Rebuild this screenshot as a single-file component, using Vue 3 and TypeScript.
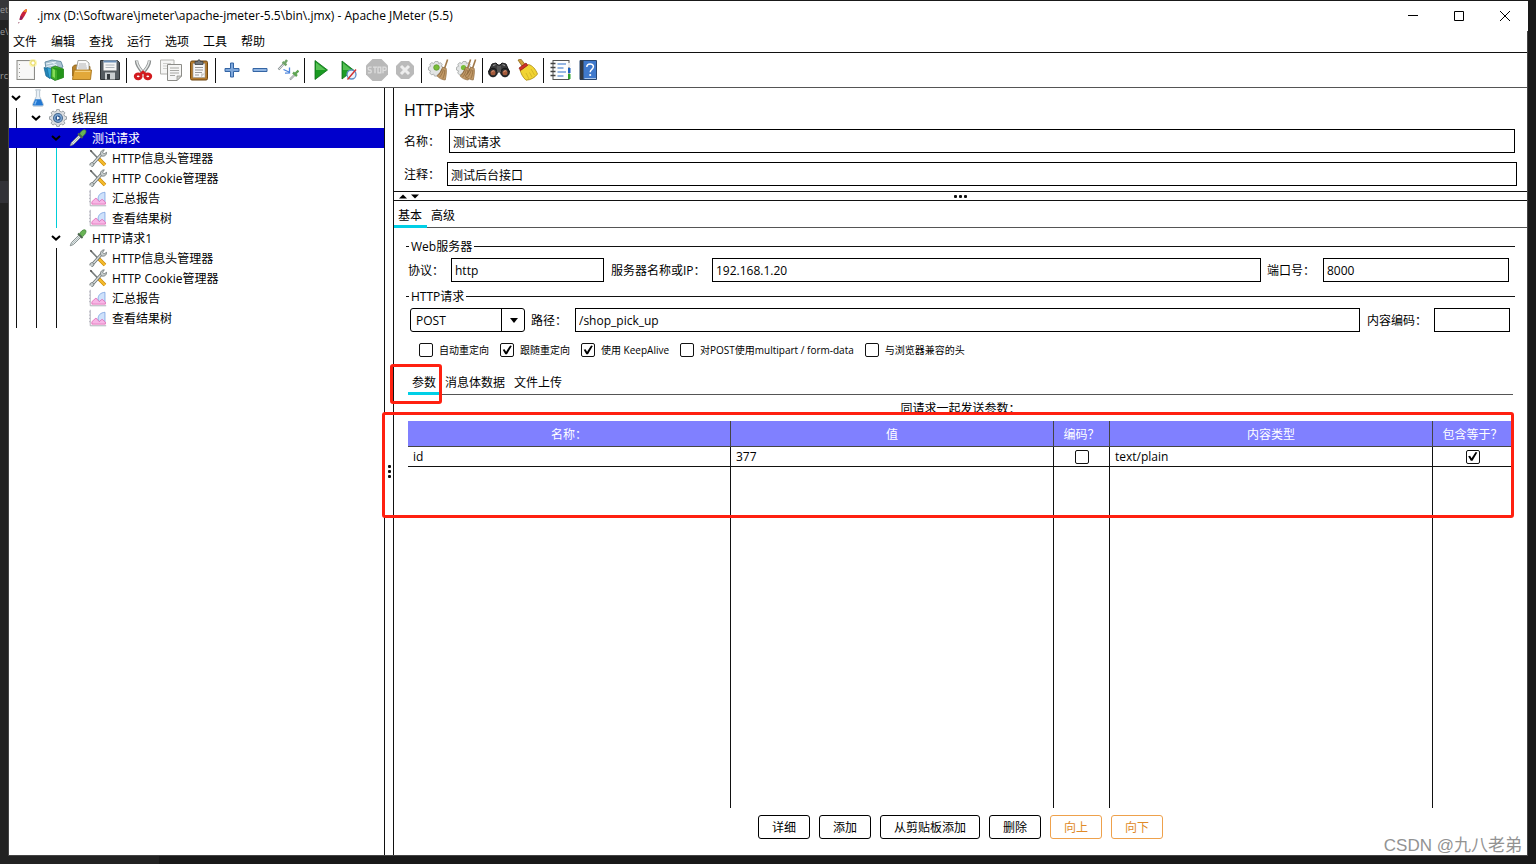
<script setup lang="ts">
import { reactive, ref } from 'vue'

interface TreeNode {
  label: string
  icon: string
  level: number
  open?: boolean
  selected?: boolean
  accent?: boolean
}

interface Param {
  name: string
  value: string
  encode: boolean
  type: string
  include: boolean
}

const broom =
  '<path d="M20.600 .6l-3 8.600" stroke="#a07848" stroke-width="1.600"/><path d="M15.600 8.200l3.600 1.200c.6 3-.2 8.600-1 11.600-3.200-.2-6.600-2-8.200-4.200 2.400-2 4.400-5 5.600-8.600z" fill="#c29a68" stroke="#8f6a3e" stroke-width=".7"/><path d="M16.400 10.500c-.8 3-2 5.500-3.800 7.700M17.800 11c0 3-.8 6-2 8.600M15 9.800c-.8 2.600-2 4.600-3.600 6.600" stroke="#7d5a33" stroke-width=".6" fill="none"/>'

const gear =
  '<path d="M8 2.500h3l.6 2 2-.8 1.600 1.800-1 1.800 2 1v3l-2 .8.8 2-2 1.800-2-.8-.8 2H7.500l-.8-2-2.200.8-1.800-2 .9-2L1.500 11V8.300l2.100-1-.8-2 2-1.700 2 .9z" fill="#e2e4e4" stroke="#a9adad" stroke-width=".9"/>'

const icons: Record<string, string> = {
  feather:
    '<path d="M15.800 1.500c1 1.200.6 2.600-.1 4.200l-2.400 5-3.600 5.300-3.300.6c-.2-2.600.7-5.400 2-8 1.700-3.300 4.600-6.300 7.400-7.100z" fill="#c8203c"/><path d="M15.800 1.500c1 1.200.6 2.600-.1 4.200l-4.200-.6c1-1.700 2.800-3 4.300-3.600z" fill="#f08a24"/><path d="M8 10.500l2.800 2.200-2.100 3.300-2.300.6c-.1-2 .5-4 1.600-6.100z" fill="#8b2060"/><path d="M5.500 19.500l-.6 1.500" stroke="#7a1a3c" stroke-width="1.200" fill="none"/>',
  file: '<rect x="2" y="1.500" width="17.500" height="19" fill="#efefed" stroke="#8c8c88"/><rect x="3.500" y="3" width="14.500" height="16" fill="#f8f8f7"/><path d="M4.500 5v1M4.500 9v1M4.500 13v1M4.500 17v1" stroke="#9a9a96"/><circle cx="18" cy="4" r="4" fill="#fbf3a0" opacity=".75"/><circle cx="18" cy="4" r="2.200" fill="#fff" stroke="#ead94e"/>',
  templates:
    '<path d="M2 3l7-2 9 1.500L20 8 9 14 3 10z" fill="#aac3d2" stroke="#527d98" stroke-width=".8"/><path d="M3 5l10-2M3.500 7.500l10-2M9 3l5 4" stroke="#e9f4fa"/><path d="M1 8.500l6 2v9L3 17z" fill="#2384b8" stroke="#11618c" stroke-width=".7"/><path d="M4 8.500l8 2.500v10l-6-2.500z" fill="#38a7d8" stroke="#1574a0" stroke-width=".7"/><path d="M8.500 8.500l4-1.500 8 3v8.500L12 21.500l-4-2.500z" fill="#3fae2a" stroke="#22751a" stroke-width=".7"/><path d="M8.500 8.500L14 11.500v9.500l6.500-2.500V10" fill="#23941a"/><path d="M9.500 9.500l2.500 1.500v8l-2.500-1.500z" fill="#85dd58"/>',
  open: '<path d="M1.500 8l2-2H8l1 1.500h10V17H1.500z" fill="#b8822a" stroke="#8c5f16" stroke-width=".8"/><path d="M7 1.500h8l3 2.500v8H5z" fill="#fafafa" stroke="#90908c" stroke-width=".8"/><path d="M8 5h7M7.500 7h8M7 9h9" stroke="#aaa" stroke-width=".9"/><path d="M1.500 20.500L3 11H20.500l-1 9.500z" fill="#e2a83a" stroke="#a8741a" stroke-width=".9"/><path d="M4 12.300H19.300" stroke="#fbe09a" stroke-width=".9"/>',
  save: '<path d="M1.500 1.500h17l2 2v17h-19z" fill="#555b61" stroke="#2e3236"/><rect x="4.500" y="1.500" width="13" height="10" fill="#f5f5f5"/><rect x="4.500" y="1.500" width="13" height="2" fill="#6b8fb8"/><path d="M6.500 6h9M6.500 8.500h9" stroke="#aeb4ba"/><rect x="6" y="13.500" width="10" height="7" fill="#c9cdd0"/><rect x="8" y="15" width="3" height="5.500" fill="#34393e"/>',
  cut: '<path d="M4.500 1.500c0 4 3 8.500 7.200 13" fill="none" stroke="#888c8c" stroke-width="3.400"/><path d="M17.500 1.500c0 4-3 8.500-7.200 13" fill="none" stroke="#888c8c" stroke-width="3.400"/><path d="M4.800 2c.4 4 3.200 8 6.500 11.500M17.200 2c-.4 4-3.200 8-6.500 11.500" fill="none" stroke="#e4e7e7" stroke-width="1.500"/><ellipse cx="6.200" cy="17.300" rx="2.900" ry="2.400" fill="#fff" stroke="#d21a1e" stroke-width="3"/><ellipse cx="15.800" cy="17.300" rx="2.900" ry="2.400" fill="#fff" stroke="#d21a1e" stroke-width="3"/><path d="M8 15.500l3-2.500 3 2.500" stroke="#d21a1e" stroke-width="2.600" fill="none"/>',
  copy: '<path d="M.5 1h13.500v14H.5z" fill="#f6f6f5" stroke="#b2b2ae"/><path d="M3 4.500h8M3 7h8M3 9.500h6" stroke="#cfcfcc"/><path d="M7.500 5.500H21.500V17L17 21.500H7.500z" fill="#f6f6f5" stroke="#8c8c88"/><path d="M10 9h9M10 11.500h9M10 14h9M10 16.500h5" stroke="#a8a8a4"/><path d="M17 21.500V17h4.500z" fill="#d0d0cc" stroke="#8c8c88" stroke-width=".7"/>',
  paste:
    '<rect x="2.500" y="2" width="17" height="19" rx="1.500" fill="#b37a2c" stroke="#6f4710"/><path d="M5 4.500h12v14H5z" fill="#f8f8f7" stroke="#999" stroke-width=".6"/><path d="M7 8.500h8M7 11h8M7 13.500h7M7 16h4" stroke="#999"/><path d="M13 18.500v-4h4z" fill="#cbcbc8"/><path d="M7 2.500h2.500L10.500.8h1L12.500 2.500H15v3H7z" fill="#73787c" stroke="#3b3f42" stroke-width=".8"/>',
  plus: '<path d="M9.500 4h3v5.500H18v3h-5.500V18h-3v-5.500H4v-3h5.500z" fill="#7fa8dc" stroke="#3465a4"/>',
  minus: '<path d="M4 9.500h14v3H4z" fill="#8fb4e2" stroke="#3465a4"/>',
  toggle:
    '<path d="M1.500 10.500L7 4.500" stroke="#8f9898" stroke-width="2.200"/><path d="M2 10l5-5" stroke="#f3f5f5" stroke-width=".8"/><path d="M5.500 3l4 3.200M7.500 4.500L10 1" stroke="#70a468" stroke-width="2.400"/><path d="M13 20.500l5-5" stroke="#8f9898" stroke-width="2.200"/><path d="M13.500 20l4.500-4.500" stroke="#f3f5f5" stroke-width=".8"/><path d="M16 13.500l4 3.500M18 15l3.500-3.500" stroke="#5fa453" stroke-width="2.400"/><path d="M6.500 10.500l5.500 2.500M12.500 8.500v5.500l-4.500.2" fill="none" stroke="#4b84dc" stroke-width="1.300"/>',
  play: '<path d="M5 1.500v19L17.500 11z" fill="#1a9a22" stroke="#0b6d16" stroke-width=".8"/><path d="M6 3.500V11h9.500z" fill="#58c255"/>',
  playFast:
    '<path d="M4 2v18L15.500 11z" fill="#1f9c27" stroke="#0b6d16" stroke-width=".8"/><path d="M5 4v7h8.500z" fill="#55bf53"/><circle cx="13.500" cy="15.500" r="4.500" fill="#eef4fb" stroke="#5f8fc6" stroke-width="1.300"/><path d="M9.500 20.500l8.500-10" stroke="#d23030" stroke-width="1.400"/>',
  stop: '<path d="M6.500 0h9L22 6.500v9L15.500 22h-9L0 15.500v-9z" fill="#b9b9b9"/><path d="M5.600 8.200H3.200c-1.400 0-1.400 2.800 0 2.800h1c1.400 0 1.400 2.900 0 2.900H1.900M7 8.200h4M9 8.200v6M12 8.200h2.800v5.700H12zM17 14.200v-6h2c1.600 0 1.600 3.100 0 3.100h-2" fill="none" stroke="#dedede" stroke-width="1.300"/>',
  shutdown:
    '<path d="M7 2h8l5 5v8l-5 5H7l-5-5V7z" fill="#bababa"/><path d="M7 7l8 8M15 7l-8 8" stroke="#ededed" stroke-width="3"/>',
  clear: gear + '<circle cx="9.500" cy="8.500" r="2.800" fill="#78bd38" stroke="#579127" stroke-width=".7"/>' + broom,
  clearAll:
    gear + '<circle cx="8.500" cy="8.500" r="2.600" fill="#78bd38"/><g transform="translate(-5 0)">' + broom + '</g>' + broom,
  search:
    '<path d="M4 5l4-1 2 2h2l2-2 4 1 3.500 8H.5z" fill="#3d3d3e" stroke="#1d1d1e"/><path d="M5 6.500l2.500-.8M14.500 5.700l2.500.8" stroke="#9c9c9c"/><circle cx="5" cy="13.500" r="4.300" fill="#2c2c2d" stroke="#121212"/><circle cx="17" cy="13.500" r="4.300" fill="#2c2c2d" stroke="#121212"/><circle cx="5" cy="13.700" r="2.500" fill="#a55a3a"/><circle cx="17" cy="13.700" r="2.500" fill="#a55a3a"/><path d="M3.500 13.300c.6-1.500 2-1.800 3-1.300M15.500 13.300c.6-1.500 2-1.800 3-1.300" stroke="#e0a284" fill="none"/><path d="M9 7h4v6H9z" fill="#555"/>',
  broomYellow:
    '<path d="M2 1l3-.8L9.500 6 7 8.500z" fill="#d3a13c" stroke="#8d6a1c" stroke-width=".8"/><path d="M6 10l6.500-4.500c4 1 7 4.500 9 9.500-2.500 3.500-6.500 6-11.500 6.200C6.500 18 5 14.500 4 11z" fill="#f1d433" stroke="#aa8a12" stroke-width=".8"/><path d="M3 9L10 4l1.800 2.200-7.300 5.300z" fill="#d03028" stroke="#8e1712" stroke-width=".7"/><path d="M10 14l3 6M13.500 13.500L16 18M15 10l3.500 6" stroke="#c8aa24" stroke-width=".7"/>',
  list: '<rect x="4" y="1.500" width="16" height="19" fill="#fdfdfd" stroke="#555"/><path d="M8.500 5h8.500M8.500 9h6M8.500 13h8.500M8.500 17h6" stroke="#2c6fc9" stroke-width="1.200"/><path d="M1.500 4.500h5M1.500 8.500h5M1.500 12.500h5M1.500 16.500h5" stroke="#444" stroke-width="1.300"/><path d="M19 4h2.500v4H19z" fill="#eee"/><path d="M19 9h2.500v5H19z" fill="#1d60c0"/><path d="M19 15h2.500v5H19z" fill="#2ea22e"/>',
  help: '<path d="M3 1.500h16.500v19H3z" fill="#3f79cc" stroke="#28466f"/><path d="M3 1.500h3.500v19H3z" fill="#33383f"/><path d="M7.500 19.500H19" stroke="#a7c4ea"/><path d="M9.800 8c0-4.200 6.800-4 6.600-.2-.1 2.700-3.200 2.500-3.200 5.400" fill="none" stroke="#fff" stroke-width="1.500"/><circle cx="13.200" cy="16" r="1.100" fill="#fff"/>',
  flask:
    '<path d="M8 1h6l-1 1.500v6.500l4.500 9.500c.5 1.300-.2 2.500-1.700 2.500H6.200c-1.500 0-2.200-1.200-1.700-2.500L9 9V2.500z" fill="#e9f0f6" stroke="#a4b4c0" stroke-width=".9"/><path d="M7.500 12.500h7l2.500 6c.3 1-.2 1.800-1.300 1.800H6.300c-1.100 0-1.600-.8-1.300-1.800z" fill="#2378d2"/><path d="M9 14l-2 5" stroke="#83bdf3" stroke-width="1.500"/>',
  gear: '<path d="M9.500 .5h3l.6 2.300 2 .8 2.100-1.200 2.300 2.300-1.200 2.100.8 2 2.300.6v3.200l-2.300.6-.8 2 1.200 2.100-2.300 2.300-2.100-1.200-2 .8-.6 2.300h-3l-.6-2.300-2-.8-2.100 1.200-2.300-2.300 1.200-2.100-.8-2-2.300-.6V9.400l2.300-.6.8-2-1.200-2.100 2.300-2.300 2.100 1.200 2-.8z" fill="#dcdfe2" stroke="#8b9298" stroke-width="1"/><circle cx="11" cy="11" r="5.500" fill="#7ea9d6" stroke="#4c6c90" stroke-width="1.300"/><circle cx="11" cy="11" r="3.200" fill="#2e568c"/><path d="M9.800 8.800l3.700 2.200-3.700 2.200z" fill="#fff"/>',
  dropper:
    '<path d="M1.500 20.500l1.500-4 9-9 2.500 2.500-9 9z" fill="#dfe6e6" stroke="#7a8585" stroke-width="1.100"/><path d="M3.500 18.500l9-9" stroke="#a9b6b6"/><path d="M11 5.500l5.500 5.500" stroke="#4f6650" stroke-width="2.200"/><path d="M13 6c1-2.800 4-5.500 6.500-5 2.200.8 1.800 4.500-3 8.500z" fill="#69b455" stroke="#3f7d36" stroke-width=".9"/>',
  tools:
    '<path d="M12 12l7.500 7.500" stroke="#c98a0c" stroke-width="4.400"/><path d="M12 12l7.500 7.500" stroke="#f6bd2e" stroke-width="2.600"/><path d="M2 2l10 10.500" stroke="#777d7d" stroke-width="1.900"/><path d="M1 .8l2.500 1 .3 2-2-.4z" fill="#555"/><path d="M4 19L16 5.500" stroke="#6d7474" stroke-width="3.600"/><path d="M4 19L16 5.500" stroke="#d7dcdc" stroke-width="1.700"/><path d="M14.500 7.500c-1.500-3 .6-6.500 4.200-6.500l-2 3 1.800 2L21.500 4c.3 3.600-3 5.500-6 4.500zM1 20c-.3-2.600 1.700-3.800 3.400-3.200s2.200 2.600.6 4.200l-2 .6" fill="#c7cdcd" stroke="#6d7474" stroke-width="1"/>',
  chart:
    '<path d="M1.500 1v19.500H21" fill="none" stroke="#a9a9b4" stroke-width="1.100"/><path d="M0 3.500h1.500M0 7.500h1.500M0 11.500h1.500M0 15.500h1.500" stroke="#a9a9b4"/><path d="M11 12.500c0-5 3-8 8.500-8.500v13.500l-7-2z" fill="#cfe2fb" stroke="#7aa2e0" stroke-width="1"/><path d="M3.500 18.500v-3l5-4.500 4 4.500 3.500-3 4 3.500v2.500z" fill="#f7b6e6" stroke="#e06ab4" stroke-width="1"/>',
}

const menus = ['文件', '编辑', '查找', '运行', '选项', '工具', '帮助']

const toolGroups: { icon: string; title: string }[][] = [
  [
    { icon: 'file', title: '新建' },
    { icon: 'templates', title: '模板' },
    { icon: 'open', title: '打开' },
    { icon: 'save', title: '保存' },
  ],
  [
    { icon: 'cut', title: '剪切' },
    { icon: 'copy', title: '复制' },
    { icon: 'paste', title: '粘贴' },
  ],
  [
    { icon: 'plus', title: '展开' },
    { icon: 'minus', title: '收起' },
    { icon: 'toggle', title: '切换' },
  ],
  [
    { icon: 'play', title: '启动' },
    { icon: 'playFast', title: '不停顿开始' },
    { icon: 'stop', title: '停止' },
    { icon: 'shutdown', title: '关闭' },
  ],
  [
    { icon: 'clear', title: '清除' },
    { icon: 'clearAll', title: '清除全部' },
  ],
  [
    { icon: 'search', title: '搜索' },
    { icon: 'broomYellow', title: '重置搜索' },
  ],
  [
    { icon: 'list', title: '函数助手' },
    { icon: 'help', title: '帮助' },
  ],
]

const tree: TreeNode[] = [
  { label: 'Test Plan', icon: 'flask', level: 0, open: true },
  { label: '线程组', icon: 'gear', level: 1, open: true },
  { label: '测试请求', icon: 'dropper', level: 2, open: true, selected: true },
  { label: 'HTTP信息头管理器', icon: 'tools', level: 3, accent: true },
  { label: 'HTTP Cookie管理器', icon: 'tools', level: 3, accent: true },
  { label: '汇总报告', icon: 'chart', level: 3, accent: true },
  { label: '查看结果树', icon: 'chart', level: 3, accent: true },
  { label: 'HTTP请求1', icon: 'dropper', level: 2, open: true },
  { label: 'HTTP信息头管理器', icon: 'tools', level: 3 },
  { label: 'HTTP Cookie管理器', icon: 'tools', level: 3 },
  { label: '汇总报告', icon: 'chart', level: 3 },
  { label: '查看结果树', icon: 'chart', level: 3 },
]

const form = reactive({
  name: '测试请求',
  comment: '测试后台接口',
  protocol: 'http',
  host: '192.168.1.20',
  port: '8000',
  method: 'POST',
  path: '/shop_pick_up',
  encoding: '',
})

const options = reactive([
  { label: '自动重定向', on: false },
  { label: '跟随重定向', on: true },
  { label: '使用 KeepAlive', on: true },
  { label: '对POST使用multipart / form-data', on: false },
  { label: '与浏览器兼容的头', on: false },
])

const mainTabs = ['基本', '高级']
const mainTab = ref('基本')
const bodyTabs = ['参数', '消息体数据', '文件上传']
const bodyTab = ref('参数')

const params = reactive<Param[]>([
  { name: 'id', value: '377', encode: false, type: 'text/plain', include: true },
])

const actions = [
  { label: '详细', off: false },
  { label: '添加', off: false },
  { label: '从剪贴板添加', off: false },
  { label: '删除', off: false },
  { label: '向上', off: true },
  { label: '向下', off: true },
]
</script>

<template>
  <div class="desktop">
    <div class="behind" aria-hidden="true">
      <span class="frag first">et</span>
      <span class="frag second">e\</span>
      <span class="frag third">rc</span>
      <span class="patch"></span>
    </div>

    <div class="window">
      <header class="titlebar">
        <svg class="icon app-icon" viewBox="0 0 22 22" v-html="icons.feather"></svg>
        <span class="title">.jmx (D:\Software\jmeter\apache-jmeter-5.5\bin\.jmx) - Apache JMeter (5.5)</span>
        <button class="win-btn" aria-label="最小化">
          <svg viewBox="0 0 10 10"><path d="M0 4.500h10" /></svg>
        </button>
        <button class="win-btn" aria-label="最大化">
          <svg viewBox="0 0 10 10"><path d="M.5.5h9v9h-9z" /></svg>
        </button>
        <button class="win-btn" aria-label="关闭">
          <svg viewBox="0 0 10 10"><path d="M0 0l10 10M10 0L0 10" /></svg>
        </button>
      </header>

      <div class="frame">
        <nav class="menubar">
          <button v-for="m in menus" :key="m" class="menu">{{ m }}</button>
        </nav>

        <div class="toolbar" role="toolbar">
          <div v-for="(group, gi) in toolGroups" :key="gi" class="tool-group">
            <button v-for="t in group" :key="t.icon" class="tool" :title="t.title" :aria-label="t.title">
              <svg class="icon" viewBox="0 0 22 22" v-html="icons[t.icon]"></svg>
            </button>
          </div>
        </div>

        <div class="body">
          <aside class="tree" role="tree">
            <div
              v-for="(node, i) in tree"
              :key="i"
              class="node"
              :class="{ selected: node.selected }"
              role="treeitem"
            >
              <span
                v-for="k in node.level"
                :key="k"
                class="guide"
                :class="{ accent: node.accent && k === 3 }"
              ></span>
              <span class="twist">
                <svg v-if="node.open" viewBox="0 0 10 6"><path d="M1 1l4 3.600L9 1" /></svg>
              </span>
              <svg class="icon node-icon" viewBox="0 0 22 22" v-html="icons[node.icon]"></svg>
              <span class="node-label">{{ node.label }}</span>
            </div>
          </aside>

          <div class="splitter"><i></i><i></i><i></i></div>

          <main class="panel">
            <h1 class="heading">HTTP请求</h1>
            <div class="row name-row">
              <label for="name">名称：</label>
              <input id="name" v-model="form.name" type="text" />
            </div>
            <div class="row comment-row">
              <label for="comment">注释：</label>
              <input id="comment" v-model="form.comment" type="text" />
            </div>

            <div class="hsplit">
              <svg class="arrows" viewBox="0 0 20 5"><path d="M0 4.500L4 .5l4 4zM12 .5h8l-4 4z" /></svg>
              <span class="dots"><i></i><i></i><i></i></span>
            </div>

            <div class="tabs main-tabs" role="tablist">
              <button
                v-for="t in mainTabs"
                :key="t"
                class="tab"
                :class="{ active: t === mainTab }"
                role="tab"
                @click="mainTab = t"
              >
                {{ t }}
              </button>
            </div>

            <div class="legend"><span>Web服务器</span></div>
            <div class="row server-row">
              <label class="w-protocol" for="protocol">协议：</label>
              <input id="protocol" v-model="form.protocol" class="f-protocol" type="text" />
              <label class="w-host" for="host">服务器名称或IP：</label>
              <input id="host" v-model="form.host" class="f-host" type="text" />
              <label class="w-port" for="port">端口号：</label>
              <input id="port" v-model="form.port" class="f-port" type="text" />
            </div>

            <div class="legend"><span>HTTP请求</span></div>
            <div class="row path-row">
              <div class="combo">
                <select v-model="form.method" aria-label="方法">
                  <option>POST</option>
                  <option>GET</option>
                </select>
                <span class="combo-arrow">
                  <svg viewBox="0 0 8 5"><path d="M0 0h8L4 5z" /></svg>
                </span>
              </div>
              <label class="w-path" for="path">路径：</label>
              <input id="path" v-model="form.path" type="text" />
              <label class="w-encoding" for="encoding">内容编码：</label>
              <input id="encoding" v-model="form.encoding" class="f-encoding" type="text" />
            </div>

            <div class="checks">
              <label v-for="o in options" :key="o.label" class="check">
                <input v-model="o.on" type="checkbox" />
                <span>{{ o.label }}</span>
              </label>
            </div>

            <div class="tabs body-tabs" role="tablist">
              <button
                v-for="t in bodyTabs"
                :key="t"
                class="tab"
                :class="{ active: t === bodyTab }"
                role="tab"
                @click="bodyTab = t"
              >
                {{ t }}
              </button>
              <span class="mark mark-tab"></span>
            </div>

            <div class="caption">同请求一起发送参数：</div>
            <div class="table-area">
              <table>
                <colgroup>
                  <col />
                  <col />
                  <col class="c-encode" />
                  <col />
                  <col class="c-include" />
                </colgroup>
                <thead>
                  <tr>
                    <th>名称：</th>
                    <th>值</th>
                    <th>编码？</th>
                    <th>内容类型</th>
                    <th>包含等于？</th>
                  </tr>
                </thead>
                <tbody>
                  <tr v-for="p in params" :key="p.name" class="data">
                    <td>{{ p.name }}</td>
                    <td>{{ p.value }}</td>
                    <td class="center"><input v-model="p.encode" type="checkbox" aria-label="编码" /></td>
                    <td>{{ p.type }}</td>
                    <td class="center"><input v-model="p.include" type="checkbox" aria-label="包含等于" /></td>
                  </tr>
                  <tr class="filler">
                    <td></td>
                    <td></td>
                    <td></td>
                    <td></td>
                    <td></td>
                  </tr>
                </tbody>
              </table>
              <span class="mark mark-table"></span>
            </div>

            <div class="actions">
              <button v-for="a in actions" :key="a.label" class="action" :class="{ off: a.off }">
                {{ a.label }}
              </button>
            </div>
          </main>
        </div>
      </div>
    </div>
    <div class="watermark">CSDN @九八老弟</div>
  </div>
</template>

<style>
body {
  margin: 0;
  background: #191919;
}
</style>

<style scoped>
* {
  box-sizing: border-box;
}

.desktop {
  position: relative;
  display: flex;
  height: 100vh;
  padding: 1px 8px 8px 8px;
  overflow: hidden;
  background: #191919;
  color: #000;
  font: 12px/16px 'Open Sans', 'Noto Sans CJK SC', sans-serif;
}

button,
input,
select {
  margin: 0;
  padding: 0;
  border: 0;
  border-radius: 0;
  background: none;
  color: inherit;
  font: inherit;
}

.icon {
  display: block;
  flex: none;
  width: 22px;
  height: 22px;
}

/* Editor window showing past the left edge */
.behind {
  position: absolute;
  inset: 0 auto 0 0;
  width: 159px;
  background: #222;
  color: #999;
  font-size: 9px;
}

.frag {
  position: absolute;
  left: 0;
  width: 9px;
  white-space: nowrap;
}

.first {
  top: 0;
  height: 20px;
  background: #37373a;
  line-height: 20px;
}

.second {
  top: 24px;
}

.third {
  top: 68px;
}

.patch {
  position: absolute;
  top: 181px;
  left: 0;
  width: 9px;
  height: 22px;
  background: #323237;
}

.window {
  position: relative;
  display: flex;
  flex: 1;
  flex-direction: column;
  min-width: 0;
  border-left: 1px solid #444;
  background: #fff;
}

.titlebar {
  display: flex;
  flex: none;
  align-items: center;
  height: 30px;
  padding-left: 4px;
}

.app-icon {
  width: 16px;
  height: 16px;
  margin: 0 4px 0 2px;
}

.title {
  flex: 1;
  padding-left: 2px;
  white-space: nowrap;
}

.win-btn {
  display: flex;
  align-items: center;
  justify-content: center;
  width: 46px;
  height: 30px;
}

.win-btn svg {
  width: 10px;
  height: 10px;
  fill: none;
  stroke: #000;
}

.frame {
  display: flex;
  flex: 1;
  flex-direction: column;
  min-height: 0;
  border: solid #444;
  border-width: 0 1px 1px 0;
}

.menubar {
  display: flex;
  flex: none;
  gap: 14px;
  height: 22px;
  padding: 1px 0 0 4px;
  border-bottom: 1px solid #111;
}

.toolbar {
  display: flex;
  flex: none;
  align-items: center;
  height: 35px;
  padding-left: 3px;
  border-bottom: 1px solid #555;
}

.tool-group {
  display: flex;
  align-items: center;
}

.tool-group + .tool-group::before {
  width: 1px;
  height: 25px;
  margin: 0 2px;
  background: #111;
  content: '';
}

.tool {
  padding: 0 3px;
}

.body {
  display: flex;
  flex: 1;
  min-height: 0;
}

.tree {
  flex: none;
  width: 375px;
}

.node {
  display: flex;
  align-items: center;
  height: 20px;
}

.guide {
  align-self: stretch;
  width: 20px;
  padding-left: 7px;
}

.guide::before {
  display: block;
  width: 1px;
  height: 100%;
  background: #111;
  content: '';
}

.guide.accent::before {
  background: #00ced8;
}

.selected {
  background: #0000cc;
  color: #fff;
}

.selected .guide::before {
  background: none;
}

.twist {
  display: flex;
  justify-content: center;
  width: 14px;
  margin-right: 4px;
}

.twist svg {
  width: 10px;
  height: 6px;
  fill: none;
  stroke: #000;
  stroke-width: 2;
}

.node-icon {
  width: 18px;
  height: 18px;
  margin: 0 2px;
}

.node-label {
  padding: 2px 0 0 3px;
  white-space: nowrap;
}

.splitter {
  display: flex;
  flex: none;
  flex-direction: column;
  align-items: center;
  justify-content: center;
  gap: 2px;
  width: 10px;
  border: solid #111;
  border-width: 0 1px;
}

.splitter i,
.dots i {
  width: 3px;
  height: 3px;
  border-radius: 1px;
  background: #111;
}

.panel {
  display: flex;
  flex: 1;
  flex-direction: column;
  min-width: 0;
}

.heading {
  margin: 0;
  padding: 10px 10px 7px;
  font-size: 16px;
  font-weight: 400;
  line-height: 24px;
}

.row {
  display: flex;
  align-items: center;
}

.row label {
  flex: none;
  padding-top: 2px;
  white-space: nowrap;
}

input[type='text'] {
  flex: 1;
  min-width: 0;
  height: 24px;
  padding: 1px 3px 0;
  border: 1px solid #000;
}

.name-row {
  padding: 0 12px 9px 10px;
}

.name-row label {
  width: 45px;
}

.comment-row {
  padding: 0 10px 5px;
}

.comment-row label {
  width: 43px;
}

.hsplit {
  display: flex;
  position: relative;
  flex: none;
  align-items: center;
  justify-content: center;
  height: 10px;
  border: solid #111;
  border-width: 1px 0;
}

.arrows {
  position: absolute;
  left: 5px;
  width: 20px;
  height: 5px;
}

.dots {
  display: flex;
  gap: 2px;
}

.tabs {
  display: flex;
  position: relative;
  flex: none;
}

.tabs::after {
  position: absolute;
  right: 0;
  bottom: 0;
  left: 0;
  height: 1px;
  background: #555;
  content: '';
}

.tab {
  position: relative;
  padding: 2px 5px 0 4px;
}

.tab.active::after {
  position: absolute;
  z-index: 1;
  right: 0;
  bottom: 0;
  left: 0;
  height: 3px;
  background: #00cfe6;
  content: '';
}

.main-tabs {
  height: 27px;
}

.legend {
  display: flex;
  align-items: center;
  margin: 10px 12px 3px;
}

.legend::before {
  width: 3px;
  height: 1px;
  background: #111;
  content: '';
}

.legend::after {
  flex: 1;
  height: 1px;
  background: #111;
  content: '';
}

.legend span {
  height: 17px;
  padding: 1px 2px 0;
}

.server-row {
  padding: 0 18px 0 14px;
}

.server-row + .legend {
  margin-top: 6px;
}

.w-protocol {
  width: 43px;
}

.w-host {
  width: 108px;
  padding-left: 7px;
}

.w-port {
  width: 62px;
  padding-left: 6px;
}

.server-row .f-protocol {
  flex: 145 0 0;
}

.server-row .f-host {
  flex: 541 0 0;
}

.server-row .f-port {
  flex: 178 0 0;
}

.path-row {
  padding: 0 17px 0 16px;
}

.combo {
  position: relative;
  width: 115px;
  height: 24px;
}

.combo select {
  width: 100%;
  height: 100%;
  padding: 1px 24px 0 5px;
  border: 1px solid #000;
  border-radius: 3px;
  appearance: none;
}

.combo-arrow {
  position: absolute;
  top: 0;
  right: 0;
  bottom: 0;
  display: flex;
  align-items: center;
  justify-content: center;
  width: 24px;
  border-left: 1px solid #000;
  pointer-events: none;
}

.combo-arrow svg {
  width: 8px;
  height: 5px;
}

.w-path {
  width: 50px;
  padding-left: 6px;
}

.w-encoding {
  width: 74px;
  padding-left: 7px;
}

.path-row .f-encoding {
  flex: 0 0 76px;
}

.checks {
  display: flex;
  gap: 11px;
  padding: 10px 0 10px 25px;
  font-size: 10px;
}

.check {
  display: flex;
  align-items: center;
  gap: 6px;
  white-space: nowrap;
}

input[type='checkbox'] {
  display: block;
  flex: none;
  width: 14px;
  height: 14px;
  border: 1px solid #111;
  border-radius: 2px;
  appearance: none;
}

input[type='checkbox']:checked::before {
  display: block;
  width: 12px;
  height: 12px;
  background: #000;
  clip-path: polygon(14% 48%, 30% 44%, 42% 64%, 76% 12%, 90% 16%, 50% 86%, 36% 86%);
  content: '';
}

.body-tabs {
  height: 26px;
  margin: 1px 14px 0;
}

.mark {
  position: absolute;
  border: 3px solid #ff2010;
  border-radius: 3px;
  pointer-events: none;
}

.mark-tab {
  z-index: 2;
  top: -5px;
  left: -18px;
  width: 52px;
  height: 40px;
}

.caption {
  height: 17px;
  margin-top: 6px;
  overflow: hidden;
  text-align: center;
}

.table-area {
  position: relative;
  flex: 1;
  min-height: 0;
  margin: 3px 15px 0 14px;
}

table {
  width: 100%;
  height: 100%;
  border-collapse: separate;
  border-spacing: 0;
  table-layout: fixed;
}

.c-encode {
  width: 56px;
}

.c-include {
  width: 79px;
}

th {
  height: 26px;
  padding: 2px 0 0;
  border: solid #444;
  border-width: 0 1px 1px 0;
  background: #8080ff;
  color: #fff;
  font-weight: 400;
  white-space: nowrap;
}

td {
  padding: 0 5px;
  border-right: 1px solid #111;
}

th:last-child,
td:last-child {
  border-right: 0;
}

.data td {
  height: 20px;
  border-bottom: 1px solid #111;
}

.center input {
  margin: 0 auto;
}

.filler td {
  height: 100%;
}

.mark-table {
  top: -9px;
  right: -2px;
  left: -26px;
  height: 106px;
}

.actions {
  display: flex;
  flex: none;
  justify-content: center;
  gap: 9px;
  padding: 7px 0 16px;
}

.action {
  height: 24px;
  padding: 2px 13px 0;
  border: 1px solid #000;
  border-radius: 3px;
}

.action.off {
  border-color: #eea14c;
  color: #e08a28;
}

.watermark {
  position: absolute;
  right: 14px;
  bottom: 8px;
  color: #929292;
  font: 17px/20px 'Liberation Sans', 'Noto Sans CJK SC', sans-serif;
}
</style>
